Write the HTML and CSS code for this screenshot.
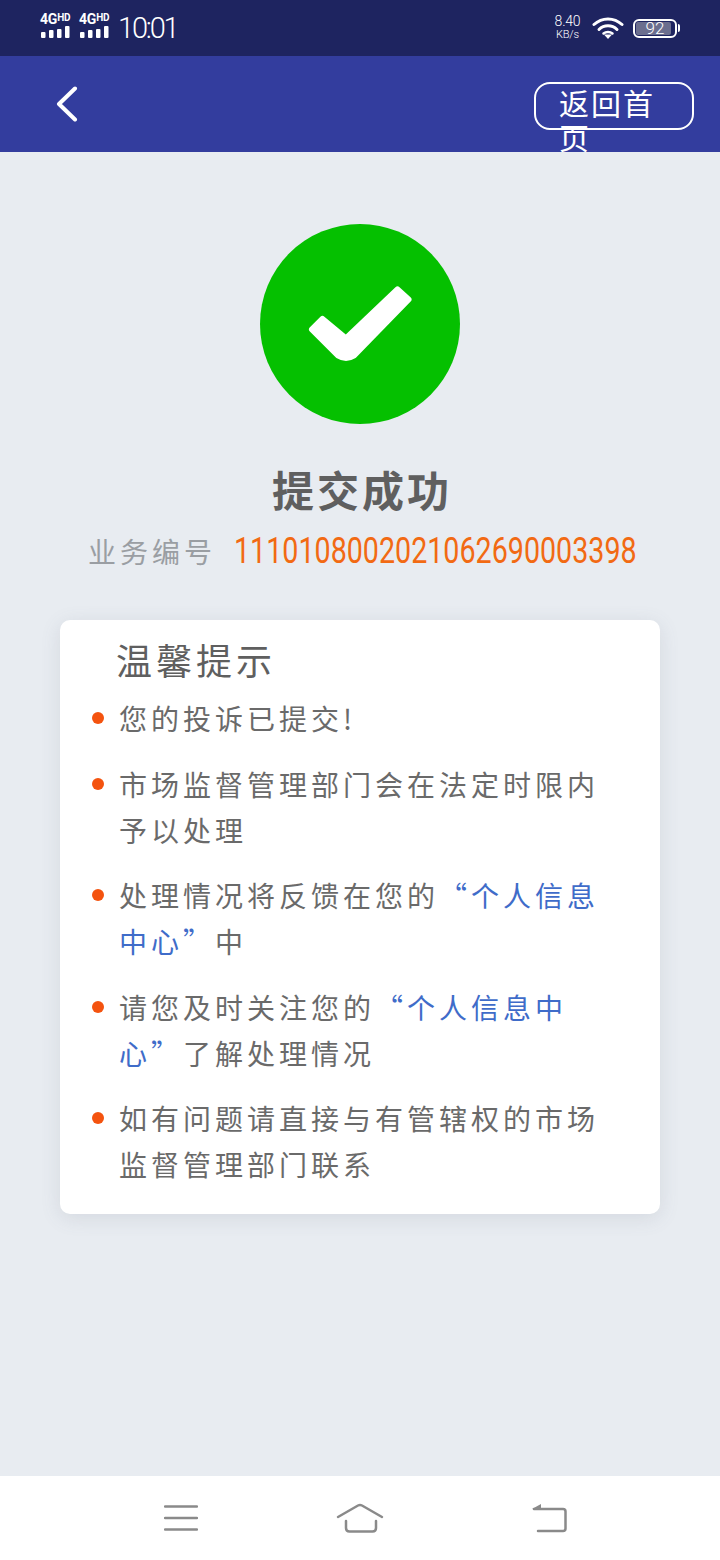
FILE: index.html
```html
<!DOCTYPE html>
<html lang="zh-CN">
<head>
<meta charset="utf-8">
<title>提交成功</title>
<link rel="stylesheet" href="styles.css">
</head>
<body>
<div class="page">
  <header class="status">
    <div class="status-left">
      <div class="sim">
        <div class="sim-label"><span class="sim-g">4G</span><span class="sim-hd">HD</span></div>
        <svg class="sim-bars" width="30" height="13" viewBox="0 0 30 13"><rect x="1" y="7" width="4.500" height="6" rx="1"/><rect x="9" y="5" width="4.500" height="8" rx="1"/><rect x="17" y="4" width="4.500" height="9" rx="1"/><rect x="25" y="1" width="4.500" height="12" rx="1"/></svg>
      </div>
      <div class="sim">
        <div class="sim-label"><span class="sim-g">4G</span><span class="sim-hd">HD</span></div>
        <svg class="sim-bars" width="30" height="13" viewBox="0 0 30 13"><rect x="1" y="7" width="4.500" height="6" rx="1"/><rect x="9" y="5" width="4.500" height="8" rx="1"/><rect x="17" y="4" width="4.500" height="9" rx="1"/><rect x="25" y="1" width="4.500" height="12" rx="1"/></svg>
      </div>
      <span class="time">10:01</span>
    </div>
    <div class="status-right">
      <div class="speed"><span class="speed-num">8.40</span><span class="speed-unit">KB/s</span></div>
      <svg class="wifi" width="32" height="24" viewBox="0 0 32 24" fill="none" stroke="#fff" stroke-width="3" stroke-linecap="round"><path d="M2 8.500C10 1 22 1 30 8.500"/><path d="M7 13.500C12 8.500 20 8.500 25 13.500"/><path d="M11.500 17.500C14 15.500 18 15.500 20.500 17.500" stroke-width="2.500"/><path d="M12 18.500L16 23L20 18.500Z" fill="#fff" stroke="none"/></svg>
      <div class="battery"><div class="battery-body"><div class="battery-fill"></div><span class="battery-num">92</span></div><div class="battery-nub"></div></div>
    </div>
  </header>
  <nav class="navbar">
    <svg class="back" width="22" height="36" viewBox="0 0 22 36" fill="none" stroke="#fff" stroke-width="4" stroke-linecap="round" stroke-linejoin="round"><path d="M19 2.500L3 18L19 33.500"/></svg>
    <div class="home-btn">返回首页</div>
  </nav>
  <main class="content">
    <div class="success-icon">
      <svg width="200" height="200" viewBox="0 0 200 200"><path d="M52 105.300L62.500 95L86 114.500L137.500 65.500L148.500 75.500L94 131.500Q86 136.500 78 131.500Z" fill="#fff" stroke="#fff" stroke-width="6" stroke-linejoin="round"/></svg>
    </div>
    <h1 class="result">提交成功</h1>
    <p class="biz"><span class="biz-label">业务编号</span><span class="biz-no">1110108002021062690003398</span></p>
    <section class="card">
      <h2 class="card-title">温馨提示</h2>
      <ul class="tips">
        <li>您的投诉已提交!</li>
        <li>市场监督管理部门会在法定时限内予以处理</li>
        <li>处理情况将反馈在您的<span class="link">“个人信息中心”</span>中</li>
        <li>请您及时关注您的<span class="link">“个人信息中心”</span>了解处理情况</li>
        <li>如有问题请直接与有管辖权的市场监督管理部门联系</li>
      </ul>
    </section>
  </main>
  <footer class="sysnav">
    <svg width="34" height="28" viewBox="0 0 34 28" fill="none" stroke="#8a8a8a" stroke-width="2.500" stroke-linecap="round"><path d="M1 2.500H33M1 14H33M1 25.500H33"/></svg>
    <svg class="sys-home" width="48" height="30" viewBox="0 0 48 30" fill="none" stroke="#8a8a8a" stroke-width="2.500" stroke-linecap="round" stroke-linejoin="round"><path d="M2 14L22 2.500Q24 1.500 26 2.500L46 14"/><path d="M10 18V25Q10 28.500 13.500 28.500H36.500Q40 28.500 40 25V18"/></svg>
    <svg class="sys-back" width="36" height="30" viewBox="0 0 36 30" fill="none" stroke="#8a8a8a" stroke-width="2.500" stroke-linecap="round" stroke-linejoin="round"><path d="M3 6H32Q34.500 6 34.500 8.500V25.500Q34.500 28 32 28H7"/><path d="M1 6L10 1V7Z" fill="#8a8a8a" stroke="none"/></svg>
  </footer>
</div>
</body>
</html>
```
FILE: styles.css
```css
* { box-sizing: border-box; }
html, body { margin: 0; padding: 0; }
body { font-family: "Noto Sans CJK SC", "Noto Sans", sans-serif; background: #e8ecf1; }
.page { width: 720px; height: 1560px; display: flex; flex-direction: column; overflow: hidden; }

.status { height: 56px; background: #1e2460; color: #fff; display: flex; justify-content: space-between; align-items: center; padding: 0 40px; font-family: Roboto, sans-serif; flex: none; }
.status-left { display: flex; align-items: center; gap: 8px; }
.sim { width: 31px; display: flex; flex-direction: column; gap: 0; margin-bottom: 5px; }
.sim-label { display: flex; height: 12px; align-items: flex-start; line-height: 13px; font-weight: 700; white-space: nowrap; }
.sim-g { font-size: 14px; letter-spacing: -.2px; }
.sim-hd { font-size: 10px; line-height: 10px; margin-left: 0; letter-spacing: -.2px; }
.sim-bars { fill: #fff; display: block; }
.time { font-size: 29px; font-weight: 300; letter-spacing: -2.200px; margin-left: 0; }
.status-right { display: flex; align-items: center; }
.speed { display: flex; flex-direction: column; align-items: center; width: 27px; font-weight: 300; line-height: 13px; margin-right: 11px; }
.speed-num { font-size: 14px; letter-spacing: -.2px; }
.speed-unit { font-size: 11px; letter-spacing: -.2px; }
.wifi { margin-right: 9px; }
.battery { display: flex; align-items: center; }
.battery-body { position: relative; width: 44px; height: 19px; border: 2px solid #fff; border-radius: 6px; display: flex; align-items: center; justify-content: center; overflow: hidden; }
.battery-fill { position: absolute; left: 1px; top: 1px; bottom: 1px; width: 35px; background: #6b6e8e; border-radius: 2px; }
.battery-num { position: relative; font-size: 17px; font-weight: 300; line-height: 15px; }
.battery-nub { width: 2px; height: 8px; background: #fff; border-radius: 0 2px 2px 0; margin-left: 1px; }

.navbar { height: 96px; background: #333d9e; display: flex; justify-content: space-between; align-items: center; padding: 0 26px 0 56px; flex: none; }
.back { display: block; }
.home-btn { width: 160px; height: 48px; margin-top: 4px; border: 2px solid #fff; border-radius: 16px; padding: 1px 23px; color: #fff; font-size: 30px; line-height: 34px; letter-spacing: 2px; }

.content { flex: 1; display: flex; flex-direction: column; align-items: center; padding-top: 72px; }
.success-icon { width: 200px; height: 200px; border-radius: 50%; background: #05c000; }
.success-icon svg { display: block; }
.result { margin: 38px 0 0; font-size: 42px; line-height: 54px; font-weight: 700; color: #5f5f5f; letter-spacing: 3px; text-indent: 4px; }
.biz { margin: 13px 0 0; height: 44px; display: flex; align-items: center; width: 600px; padding-left: 28px; white-space: nowrap; }
.biz-label { font-size: 28px; font-weight: 400; letter-spacing: 4px; color: #9a9ea3; width: 146px; flex: none; }
.biz-no { display: inline-block; flex: none; font-family: Roboto, sans-serif; font-size: 36px; font-weight: 400; color: #f26a13; transform: scaleX(.796); transform-origin: left center; }

.card { width: 600px; height: 594px; margin-top: 47px; background: #fff; border-radius: 10px; box-shadow: 0 4px 20px rgba(90, 100, 120, .14); padding: 12px 56px 0 32px; }
.card-title { margin: 0 0 0 24px; font-size: 36px; line-height: 54px; font-weight: 400; color: #5f5f5f; letter-spacing: 4px; }
.tips { margin: 9px 0 0; padding: 0; list-style: none; display: flex; flex-direction: column; gap: 19.5px; }
.tips li { position: relative; padding-left: 27px; font-size: 28px; line-height: 46px; font-weight: 400; letter-spacing: 4px; color: #6a6a6a; }
.tips li::before { content: ""; position: absolute; left: 0; top: 17px; width: 12px; height: 12px; border-radius: 50%; background: #f4530f; }
.link { color: #3f6cc9; }

.sysnav { height: 84px; background: #fff; flex: none; display: flex; align-items: center; padding-left: 164px; }
.sys-home { margin-left: 138px; }
.sys-back { margin-left: 147px; }
```
